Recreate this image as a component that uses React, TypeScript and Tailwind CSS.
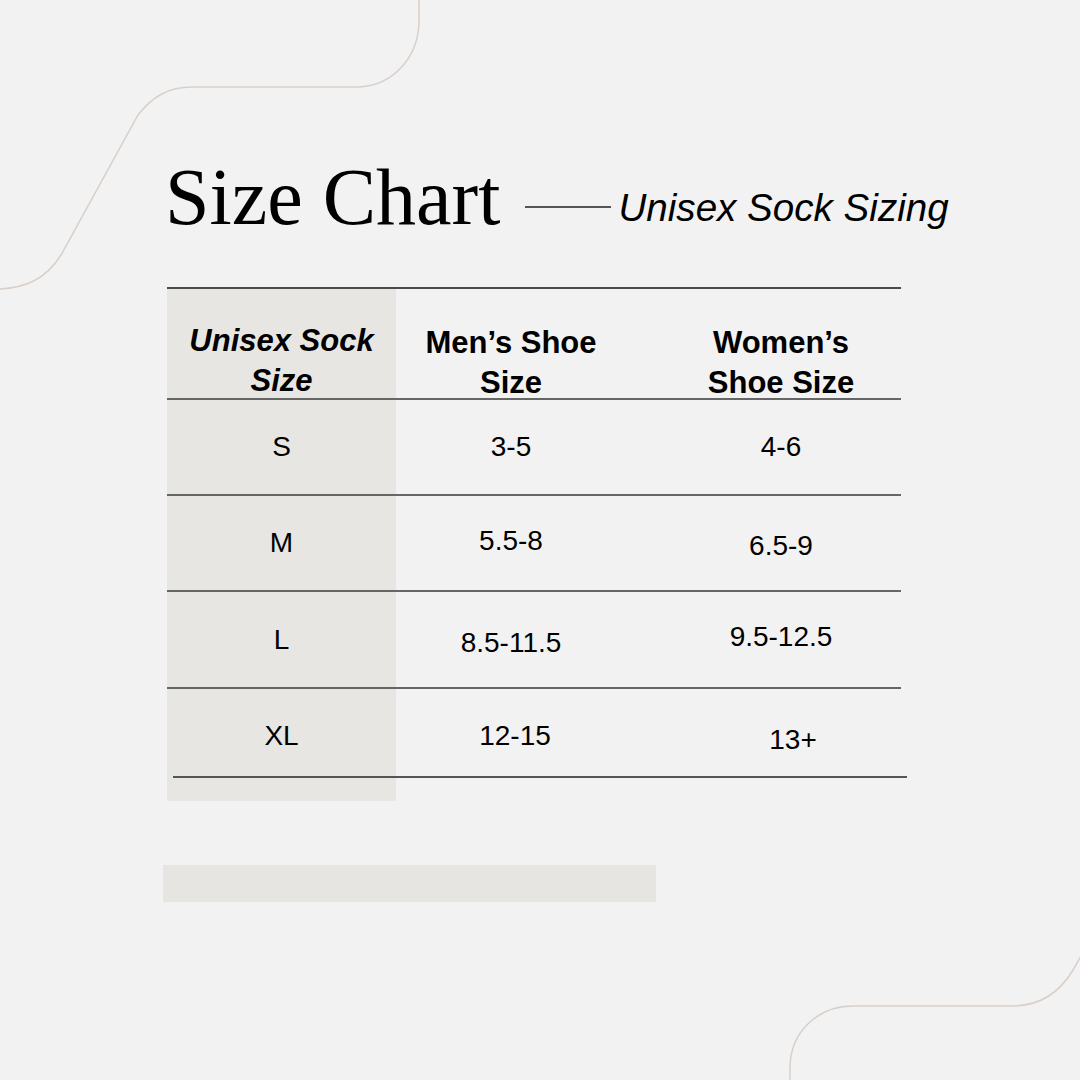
import React from 'react';

type Cell = { text: string; shift?: string };
type Row = { cells: [Cell, Cell, Cell]; height: string };

// body rows, shifts copy the slightly uneven placement of the original
const rows: Row[] = [
  { height: 'h-[96px]', cells: [{ text: 'S' }, { text: '3-5' }, { text: '4-6' }] },
  {
    height: 'h-[96px]',
    cells: [{ text: 'M' }, { text: '5.5-8', shift: '-translate-y-[2px]' }, { text: '6.5-9', shift: 'translate-y-[3px]' }],
  },
  {
    height: 'h-[97px]',
    cells: [{ text: 'L' }, { text: '8.5-11.5', shift: 'translate-y-[3px]' }, { text: '9.5-12.5', shift: '-translate-y-[3px]' }],
  },
  {
    height: 'h-[89px]',
    cells: [
      { text: 'XL', shift: 'translate-y-[3px]' },
      { text: '12-15', shift: 'translate-y-[3px] translate-x-[4px]' },
      { text: '13+', shift: 'translate-y-[7px] translate-x-[12px]' },
    ],
  },
];

const colWidths = ['w-[229px]', 'w-[230px]', 'w-[310px]'];

function Decorations() {
  return (
    <svg className="absolute inset-0 pointer-events-none" width="1080" height="1080" viewBox="0 0 1080 1080" fill="none">
      <path
        d="M-5 289 C 25 289 46 279 61 255 L 138 115 C 152 97 168 87 192 87 L 356 87 C 392 87 419 58 419 20 L 419 -5"
        stroke="#d9cfc9"
        strokeWidth="1.5"
      />
      <path
        d="M790 1085 L 790 1068 C 790 1032 818 1006 853 1006 L 1012 1006 C 1040 1006 1060 992 1073 970 L 1088 944"
        stroke="#d9cfc9"
        strokeWidth="1.5"
      />
    </svg>
  );
}

export default function App() {
  return (
    <div className="relative w-[1080px] h-[1080px] overflow-hidden bg-[#f2f2f2] text-black font-['Liberation_Sans',Arial,sans-serif]">
      <Decorations />

      <div className="relative pl-[165px] pt-[157px]">
        {/* Title */}
        <div className="flex items-start">
          <h1 className="font-['Liberation_Serif',serif] font-normal text-[80px] leading-none">Size Chart</h1>
          <div className="ml-[25px] mt-[49px] w-[86px] h-[1.5px] bg-[#555]" />
          <span className="ml-[7px] mt-[32px] italic text-[38.6px] leading-none">Unisex Sock Sizing</span>
        </div>

        {/* Table */}
        <div className="relative mt-[50px] ml-[2px] w-[734px]">
          <div className="absolute left-0 top-[2px] w-[229px] h-[512px] bg-[#e8e6e2]" />

          <div className="relative border-t-2 border-[#4a4a4a] h-[111px] flex font-bold text-[31px] leading-[40px]">
            <div className={`${colWidths[0]} shrink-0 pt-[32px] text-center italic`}>
              Unisex Sock
              <br />
              Size
            </div>
            <div className={`${colWidths[1]} shrink-0 pt-[34px] text-center`}>
              Men’s Shoe
              <br />
              Size
            </div>
            <div className={`${colWidths[2]} shrink-0 pt-[34px] text-center`}>
              Women’s
              <br />
              Shoe Size
            </div>
          </div>

          {rows.map((row, i) => (
            <div key={i} className={`relative border-t-2 border-[#666] ${row.height} flex items-center text-[28px] leading-none`}>
              {row.cells.map((cell, j) => (
                <div key={j} className={`${colWidths[j]} shrink-0 text-center ${cell.shift ?? ''}`}>
                  {cell.text}
                </div>
              ))}
            </div>
          ))}

          <div className="relative ml-[6px] w-[734px] h-[2px] bg-[#555]" />
          <div className="h-[23px]" />
        </div>

        {/* Footer bar */}
        <div className="mt-[64px] ml-[-2px] w-[493px] h-[37px] bg-[#e7e5e1]" />
      </div>
    </div>
  );
}
